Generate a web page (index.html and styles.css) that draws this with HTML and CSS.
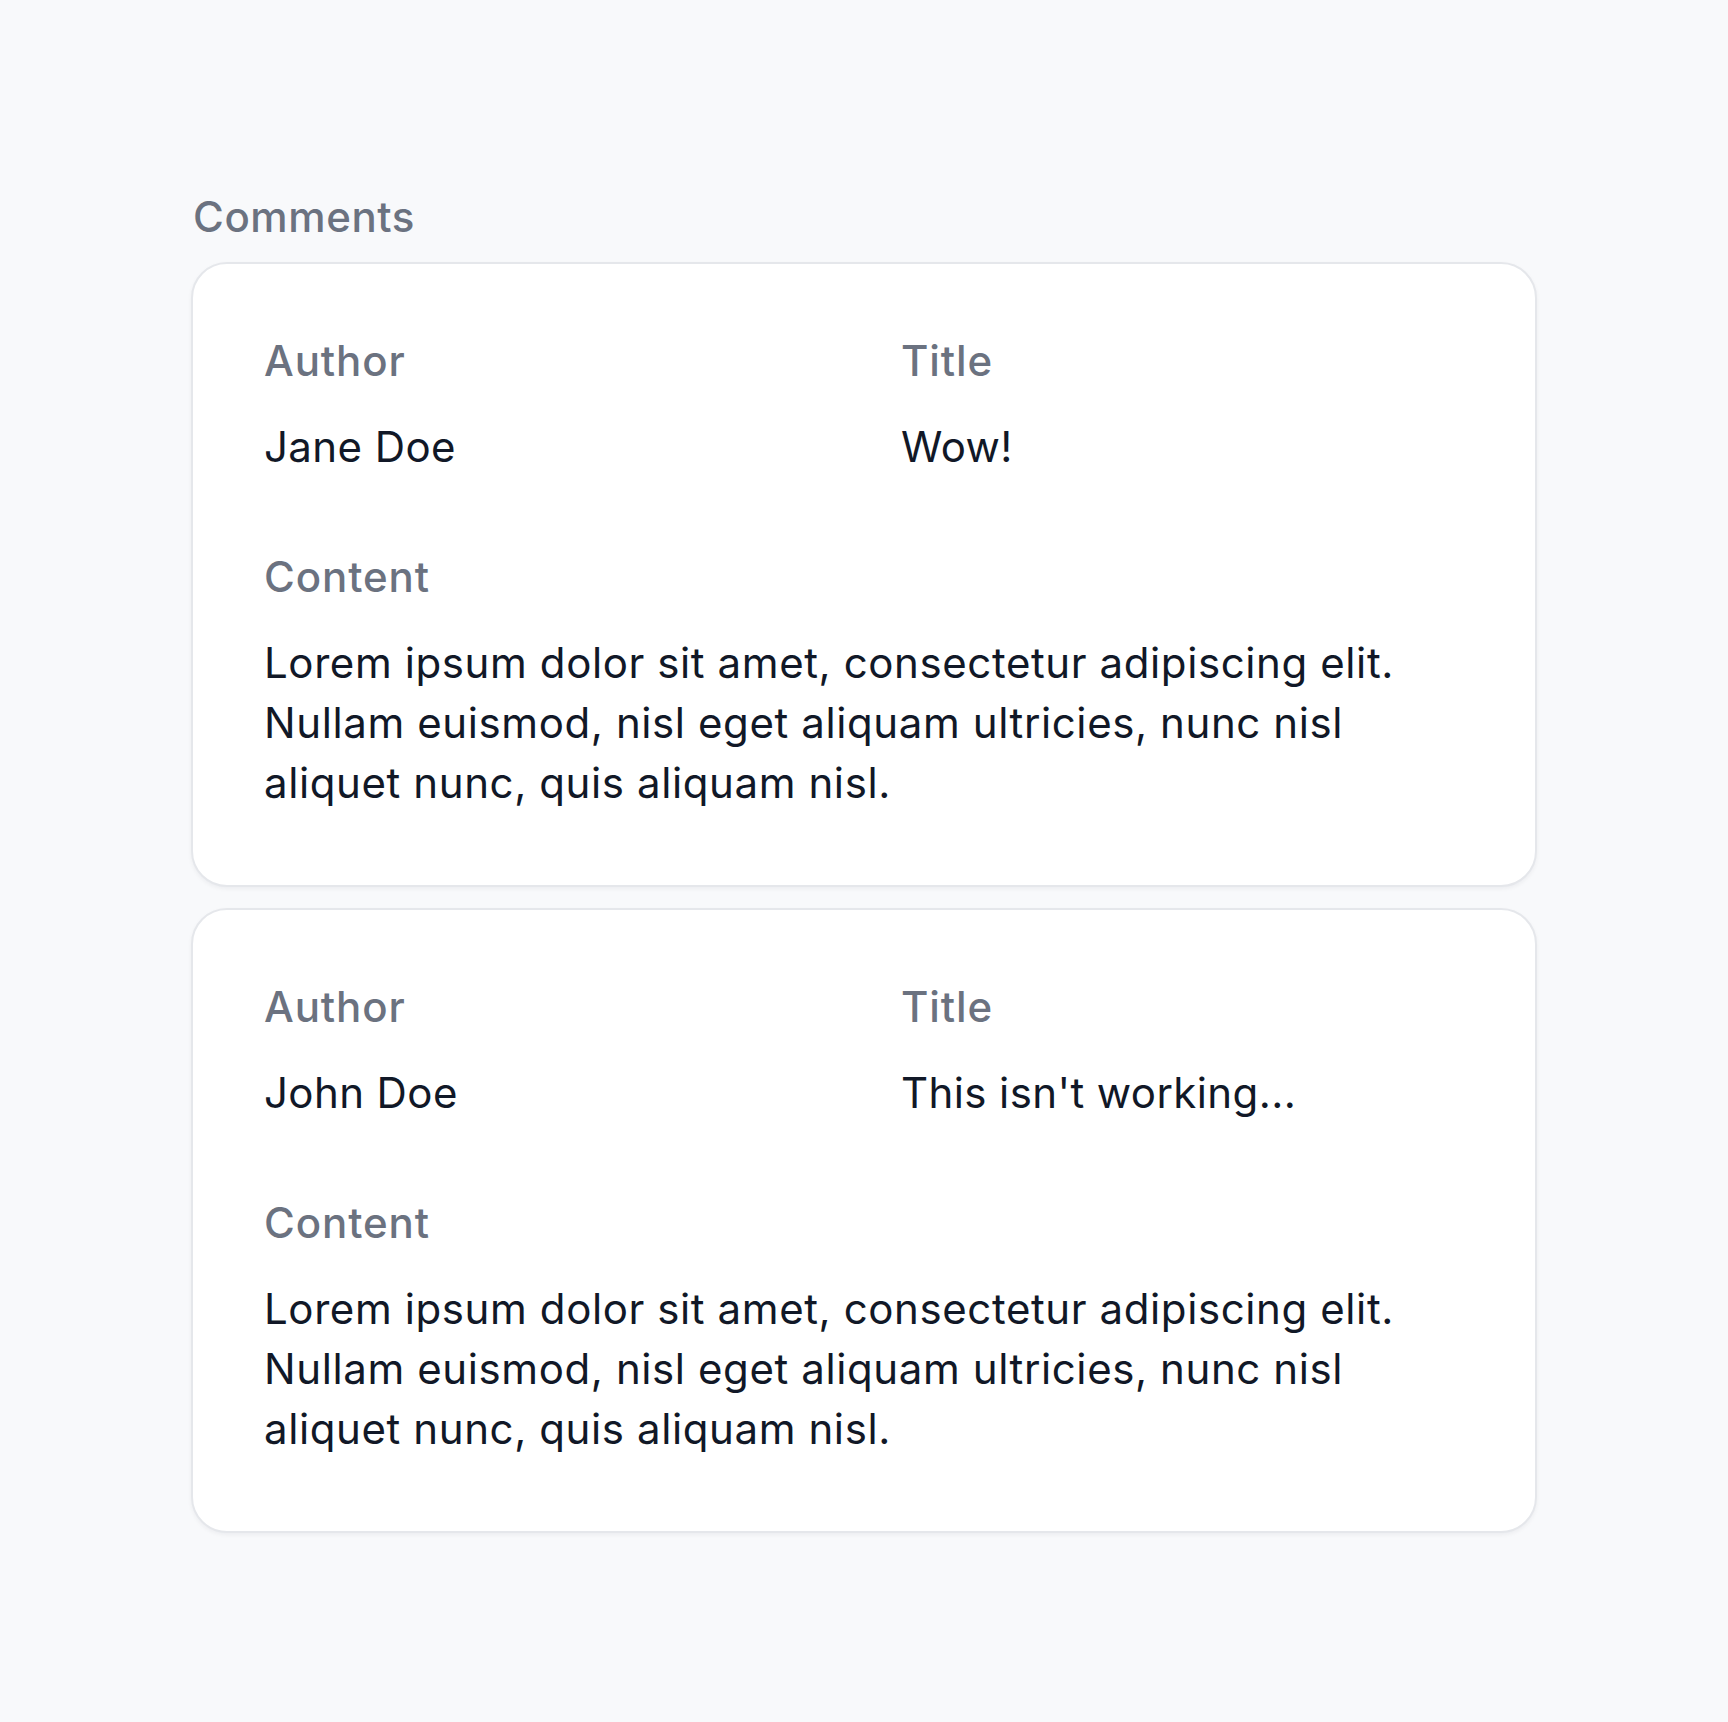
FILE: index.html
```html
<!DOCTYPE html>
<html lang="en">
<head>
<meta charset="utf-8">
<title>Comments</title>
<link rel="stylesheet" href="styles.css">
</head>
<body>
<main class="page">
  <h2 class="section-title">Comments</h2>
  <div class="comment-list">
    <article class="card">
      <div class="field">
        <div class="label">Author</div>
        <div class="value">Jane Doe</div>
      </div>
      <div class="field">
        <div class="label">Title</div>
        <div class="value">Wow!</div>
      </div>
      <div class="field field-wide">
        <div class="label">Content</div>
        <div class="value content-text">Lorem ipsum dolor sit amet, consectetur adipiscing elit. Nullam euismod, nisl eget aliquam ultricies, nunc nisl aliquet nunc, quis aliquam nisl.</div>
      </div>
    </article>
    <article class="card">
      <div class="field">
        <div class="label">Author</div>
        <div class="value">John Doe</div>
      </div>
      <div class="field">
        <div class="label">Title</div>
        <div class="value">This isn't working...</div>
      </div>
      <div class="field field-wide">
        <div class="label">Content</div>
        <div class="value content-text">Lorem ipsum dolor sit amet, consectetur adipiscing elit. Nullam euismod, nisl eget aliquam ultricies, nunc nisl aliquet nunc, quis aliquam nisl.</div>
      </div>
    </article>
  </div>
</main>
</body>
</html>
```

FILE: styles.css
```css
html, body {
  margin: 0;
  padding: 0;
}
body {
  background: #f8f9fb;
  font-family: Inter, "Noto Sans", "Liberation Sans", sans-serif;
  color: #111827;
  min-height: 1722px;
}
.page {
  width: 1346px;
  margin: 0 auto;
  padding-top: 187px;
}
.section-title {
  margin: 0 0 15px 2px;
  font-size: 42px;
  line-height: 60px;
  font-weight: 500;
  letter-spacing: 0.6px;
  color: #6b7280;
}
.comment-list {
  display: flex;
  flex-direction: column;
  gap: 21px;
}
.card {
  box-sizing: border-box;
  height: 625px;
  background: #ffffff;
  border: 2px solid #e5e7eb;
  border-radius: 36px;
  box-shadow: 0 2px 4px rgba(17, 24, 39, 0.05);
  padding: 67px 71px 72px 71px;
  display: grid;
  grid-template-columns: 637px 1fr;
  row-gap: 70px;
  align-content: start;
}
.field-wide {
  grid-column: 1 / -1;
}
.label {
  font-size: 42px;
  line-height: 60px;
  font-weight: 500;
  letter-spacing: 0.9px;
  color: #6b7280;
  margin-bottom: 26px;
}
.value {
  font-size: 42px;
  line-height: 60px;
  font-weight: 400;
  letter-spacing: 0.4px;
  color: #111827;
  max-width: 1165px;
}
.content-text {
  letter-spacing: 0.6px;
}
```
